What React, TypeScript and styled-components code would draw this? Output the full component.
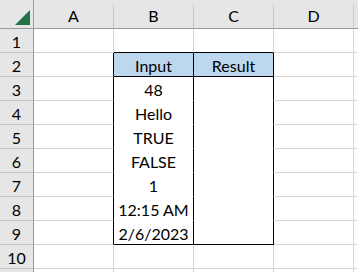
import React from "react";
import styled, { createGlobalStyle } from "styled-components";

const GlobalStyle = createGlobalStyle`
  html, body {
    margin: 0;
    padding: 0;
    background: #ffffff;
  }
  body {
    font-family: Lato, "Liberation Sans", sans-serif;
    overflow: hidden;
  }
`;

const columns = ["A", "B", "C", "D"];
const rowCount = 11;
const labelledRows = 10;

const table: Record<number, [string, string]> = {
  2: ["Input", "Result"],
  3: ["48", ""],
  4: ["Hello", ""],
  5: ["TRUE", ""],
  6: ["FALSE", ""],
  7: ["1", ""],
  8: ["12:15 AM", ""],
  9: ["2/6/2023", ""],
};

const GRID = "#d4d4d4";
const EDGE = "#000000";

export default function App() {
  const rows = Array.from({ length: rowCount }, (_, i) => i + 1);

  const cellFor = (row: number, col: string) => {
    const inTable = row >= 2 && row <= 9 && (col === "B" || col === "C");
    const value = inTable ? table[row][col === "B" ? 0 : 1] : "";
    let right = GRID;
    let bottom = GRID;
    let fill = "transparent";

    if (inTable) {
      right = EDGE;
      bottom = row === 2 || row === 9 ? EDGE : "#ffffff";
      fill = row === 2 ? "#bdd7ee" : "#ffffff";
    }
    if (col === "A" && row >= 2 && row <= 9) right = EDGE;
    if (row === 1 && (col === "B" || col === "C")) bottom = EDGE;

    return (
      <Cell key={col + row} $right={right} $bottom={bottom} $fill={fill}>
        {value}
      </Cell>
    );
  };

  return (
    <>
      <GlobalStyle />
      <Sheet>
        <Corner>
          <Triangle />
        </Corner>
        {columns.map((c) => (
          <ColumnHead key={c}>
            <ColumnLabel>{c}</ColumnLabel>
          </ColumnHead>
        ))}
        <ColumnHead>
          <ColumnLabel $last />
        </ColumnHead>

        {rows.map((r) => (
          <React.Fragment key={r}>
            <RowHead>{r <= labelledRows ? r : ""}</RowHead>
            {columns.map((c) => cellFor(r, c))}
            <Cell $right="transparent" $bottom={GRID} $fill="transparent" />
          </React.Fragment>
        ))}
      </Sheet>
    </>
  );
}

const Sheet = styled.div`
  display: grid;
  grid-template-columns: 34px repeat(4, 80px) 1fr;
  grid-template-rows: 29px repeat(${rowCount}, 24px);
  width: 358px;
  height: 272px;
  overflow: hidden;
  font-size: 16px;
  color: #000000;
`;

const Corner = styled.div`
  box-sizing: border-box;
  background: #e6e6e6;
  border-right: 1px solid #9b9b9b;
  border-bottom: 1px solid #9b9b9b;
  display: flex;
  align-items: flex-end;
  justify-content: flex-end;
  padding: 0 3px 3px 0;
`;

const Triangle = styled.div`
  width: 0;
  height: 0;
  border-left: 15px solid transparent;
  border-bottom: 15px solid #217346;
`;

const ColumnHead = styled.div`
  box-sizing: border-box;
  background: #e6e6e6;
  border-bottom: 1px solid #9b9b9b;
  padding-top: 5px;
  display: flex;
`;

const ColumnLabel = styled.div<{ $last?: boolean }>`
  flex: 1;
  box-sizing: border-box;
  border-right: 1px solid ${(p) => (p.$last ? "transparent" : "#c6c6c6")};
  display: flex;
  align-items: flex-end;
  justify-content: center;
  padding-bottom: 3px;
  line-height: 19px;
`;

const RowHead = styled.div`
  box-sizing: border-box;
  background: #e6e6e6;
  border-right: 1px solid #9b9b9b;
  border-bottom: 1px solid #c6c6c6;
  display: flex;
  align-items: flex-end;
  justify-content: center;
  line-height: 19px;
  padding-bottom: 1px;
`;

const Cell = styled.div<{ $right: string; $bottom: string; $fill: string }>`
  box-sizing: border-box;
  background: ${(p) => p.$fill};
  border-right: 1px solid ${(p) => p.$right};
  border-bottom: 1px solid ${(p) => p.$bottom};
  display: flex;
  align-items: flex-end;
  justify-content: center;
  line-height: 19px;
  padding-bottom: 1px;
  white-space: nowrap;
`;
